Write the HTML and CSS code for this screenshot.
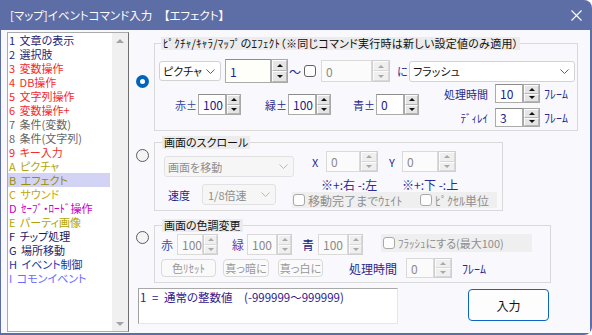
FILE: index.html
```html
<!DOCTYPE html>
<html lang="ja">
<head>
    <meta charset="UTF-8">
    <meta name="viewport" content="width=device-width, initial-scale=1.0">
    <title>[マップ]イベントコマンド入力</title>
    <link rel="stylesheet" href="styles.css">
</head>
<body>

<div class="window">
    <div class="titlebar">
        <span class="title">[マップ]イベントコマンド入力　【エフェクト】</span>
        <svg class="close" width="11" height="11" viewBox="0 0 11 11"><path d="M0.5 0.5L10.5 10.5M10.5 0.5L0.5 10.5" stroke="#fff" stroke-width="1.1" fill="none"/></svg>
    </div>

    <div class="content">
        <!-- Command list -->
        <div class="cmd-list">
            <ul class="items">
                <li class="c-navy">1 文章の表示</li>
                <li class="c-navy">2 選択肢</li>
                <li class="c-red">3 変数操作</li>
                <li class="c-red">4 DB操作</li>
                <li class="c-red">5 文字列操作</li>
                <li class="c-red">6 変数操作+</li>
                <li class="c-grey">7 条件(変数)</li>
                <li class="c-grey">8 条件(文字列)</li>
                <li class="c-red">9 キー入力</li>
                <li class="c-olive">A ピクチャ</li>
                <li class="c-olive2 selected">B エフェクト</li>
                <li class="c-gold">C サウンド</li>
                <li class="c-magenta">D ｾｰﾌﾞ・ﾛｰﾄﾞ操作</li>
                <li class="c-olive">E パーティ画像</li>
                <li class="c-dark">F チップ処理</li>
                <li class="c-dark2">G 場所移動</li>
                <li class="c-blue">H イベント制御</li>
                <li class="c-violet">I コモンイベント</li>
            </ul>
            <div class="scrollbar">
                <span class="arr-up"></span>
                <span class="arr-dn"></span>
            </div>
        </div>

        <!-- Effect settings -->
        <div class="panel">
            <div class="group">
                <span class="radio on radio-effect"></span>
                <fieldset class="box box-effect">
                    <legend class="legend-wide">ﾋﾟｸﾁｬ/ｷｬﾗ/ﾏｯﾌﾟのｴﾌｪｸﾄ（※同じコマンド実行時は新しい設定値のみ適用）</legend>
                    <div class="row-target">
                        <div class="combo combo-type">ピクチャ<svg class="chev" width="9" height="5" viewBox="0 0 9 5"><path d="M0.5 0.5L4.5 4.5L8.5 0.5" stroke="#606060" fill="none"/></svg></div>
                        <div class="spin spin-pic">
                            <span class="val">1</span>
                            <span class="btns"><i class="up"></i><i class="dn"></i></span>
                        </div>
                        <span class="tilde">～</span>
                        <span class="check"></span>
                        <div class="spin spin-to disabled">
                            <span class="val">0</span>
                            <span class="btns"><i class="up"></i><i class="dn"></i></span>
                        </div>
                        <span class="lb-ni">に</span>
                        <div class="combo combo-fx">フラッシュ<svg class="chev" width="9" height="5" viewBox="0 0 9 5"><path d="M0.5 0.5L4.5 4.5L8.5 0.5" stroke="#606060" fill="none"/></svg></div>
                    </div>
                    <div class="row-color">
                        <div class="rgb">
                            <span class="lb lb-pm c-r">赤±</span>
                            <div class="spin spin-rgb">
                                <span class="val">100</span>
                                <span class="btns"><i class="up"></i><i class="dn"></i></span>
                            </div>
                            <span class="lb lb-pm gap-g">緑±</span>
                            <div class="spin spin-rgb">
                                <span class="val">100</span>
                                <span class="btns"><i class="up"></i><i class="dn"></i></span>
                            </div>
                            <span class="lb lb-pm gap-b">青±</span>
                            <div class="spin spin-rgb">
                                <span class="val">0</span>
                                <span class="btns"><i class="up"></i><i class="dn"></i></span>
                            </div>
                        </div>
                        <div class="timing">
                            <div class="timing-row">
                                <span class="lb lb-time">処理時間</span>
                                <div class="spin spin-time">
                                    <span class="val">10</span>
                                    <span class="btns"><i class="up"></i><i class="dn"></i></span>
                                </div>
                                <span class="lb unit">ﾌﾚｰﾑ</span>
                            </div>
                            <div class="timing-row">
                                <span class="lb lb-time">ﾃﾞｨﾚｲ</span>
                                <div class="spin spin-time">
                                    <span class="val">3</span>
                                    <span class="btns"><i class="up"></i><i class="dn"></i></span>
                                </div>
                                <span class="lb unit">ﾌﾚｰﾑ</span>
                            </div>
                        </div>
                    </div>
                </fieldset>
            </div>

            <div class="group group-scroll">
                <span class="radio off radio-scroll"></span>
                <fieldset class="box box-scroll">
                    <legend class="legend-lg">画面のスクロール</legend>
                    <div class="scroll-body">
                        <div class="scroll-left">
                            <div class="combo combo-move disabled">画面を移動<svg class="chev" width="9" height="5" viewBox="0 0 9 5"><path d="M0.5 0.5L4.5 4.5L8.5 0.5" stroke="#b8b8b8" fill="none"/></svg></div>
                            <div class="speed-row">
                                <span class="lb lb-speed">速度</span>
                                <div class="combo combo-speed disabled">1/8倍速<svg class="chev" width="9" height="5" viewBox="0 0 9 5"><path d="M0.5 0.5L4.5 4.5L8.5 0.5" stroke="#b8b8b8" fill="none"/></svg></div>
                            </div>
                        </div>
                        <div class="scroll-right">
                            <div class="xy-row">
                                <span class="lb lb-x">X</span>
                                <div class="spin spin-x disabled">
                                    <span class="val">0</span>
                                    <span class="btns"><i class="up"></i><i class="dn"></i></span>
                                </div>
                                <span class="lb lb-y">Y</span>
                                <div class="spin spin-y disabled">
                                    <span class="val">0</span>
                                    <span class="btns"><i class="up"></i><i class="dn"></i></span>
                                </div>
                            </div>
                            <div class="note-row">
                                <span class="note note-x">※+:右 -:左</span>
                                <span class="note">※+:下 -:上</span>
                            </div>
                            <div class="strip strip-scroll">
                                <span class="check disabled"></span>
                                <span class="strip-text strip-wait">移動完了までｳｪｲﾄ</span>
                                <span class="check disabled"></span>
                                <span class="strip-text">ﾋﾟｸｾﾙ単位</span>
                            </div>
                        </div>
                    </div>
                </fieldset>
            </div>

            <div class="group group-tone">
                <span class="radio off radio-tone"></span>
                <fieldset class="box box-tone">
                    <legend class="legend-lg">画面の色調変更</legend>
                    <div class="tone-row">
                        <span class="lb lb-c tone-r">赤</span>
                        <div class="spin spin-tr disabled">
                            <span class="val">100</span>
                            <span class="btns"><i class="up"></i><i class="dn"></i></span>
                        </div>
                        <span class="lb lb-c tone-g">緑</span>
                        <div class="spin spin-tg disabled">
                            <span class="val">100</span>
                            <span class="btns"><i class="up"></i><i class="dn"></i></span>
                        </div>
                        <span class="lb lb-c tone-b">青</span>
                        <div class="spin spin-tg disabled">
                            <span class="val">100</span>
                            <span class="btns"><i class="up"></i><i class="dn"></i></span>
                        </div>
                        <div class="strip strip-flash">
                            <span class="check disabled"></span>
                            <span class="strip-text flash-text">ﾌﾗｯｼｭにする(最大100)</span>
                        </div>
                    </div>
                    <div class="tone-row2">
                        <span class="btn btn-reset">色ﾘｾｯﾄ</span>
                        <span class="btn btn-dark">真っ暗に</span>
                        <span class="btn btn-white">真っ白に</span>
                        <span class="lb lb-time2">処理時間</span>
                        <div class="spin spin-time2 disabled">
                            <span class="val">0</span>
                            <span class="btns"><i class="up"></i><i class="dn"></i></span>
                        </div>
                        <span class="lb unit2">ﾌﾚｰﾑ</span>
                    </div>
                </fieldset>
            </div>

            <div class="bottom">
                <div class="hint">1 = 通常の整数値　(-999999～999999)</div>
                <button type="button" class="ok">入力</button>
            </div>
        </div>
    </div>
</div>

</body>
</html>
```

FILE: styles.css
```css
body {
    margin: 0;
    background: #fff;
    font-family: "Noto Sans CJK JP", "Noto Sans", sans-serif;
    font-size: 11px;
    font-feature-settings: "palt";
    color: #111;
}

.window {
    width: 592px;
    height: 335px;
    background: #5d6ea6;
    border-radius: 0 8px 8px 0;
    display: flex;
    flex-direction: column;
    overflow: hidden;
}

.titlebar {
    height: 30px;
    flex: none;
    display: flex;
    align-items: center;
    justify-content: space-between;
    padding: 0 10px;
    color: #fff;
    font-size: 11.5px;
}

.content {
    flex: 1;
    margin: 0 2px 2px 1px;
    background: #f9f9fd;
    display: flex;
    min-height: 0;
}

/* command list */
.cmd-list {
    width: 122px;
    margin: 2px 0 1px 6px;
    box-sizing: border-box;
    border: 1px solid #ababab;
    border-right-color: #6e6e6e;
    background: #fff;
    display: flex;
    flex: none;
}

.items {
    flex: 1;
    list-style: none;
    margin: 0;
    padding: 0;
}

.items li {
    height: 14px;
    line-height: 14px;
    padding-left: 1px;
    margin-right: 2px;
    white-space: nowrap;
    word-spacing: 2px;
}

.items li.selected {
    background: #d3d3f5;
}

.c-navy { color: #1f1f78; }
.c-red { color: #f52a2a; }
.c-grey { color: #666; }
.c-olive { color: #b2a400; }
.c-olive2 { color: #9a8e00; }
.c-gold { color: #c8a600; }
.c-magenta { color: #c400c4; }
.c-dark { color: #1a1a55; }
.c-dark2 { color: #26266a; }
.c-blue { color: #2232a6; }
.c-violet { color: #6a6aff; }

.scrollbar {
    width: 16px;
    background: #f0f0f0;
    display: flex;
    flex-direction: column;
    justify-content: space-between;
    align-items: center;
    padding: 6px 0 5px;
}

.arr-up,
.arr-dn {
    width: 0;
    height: 0;
    border-left: 4px solid transparent;
    border-right: 4px solid transparent;
}

.arr-up { border-bottom: 4px solid #a3a3a3; }
.arr-dn { border-top: 4px solid #a3a3a3; }

/* right panel */
.panel {
    flex: 1;
    padding-top: 7px;
    display: flex;
    flex-direction: column;
}

.group {
    display: flex;
    align-items: flex-start;
}

.group-scroll { margin-top: 5px; }
.group-tone { margin-top: 8px; }

.radio {
    width: 13px;
    height: 13px;
    box-sizing: border-box;
    border-radius: 50%;
    margin: 0 5px 0 7px;
    flex: none;
    display: flex;
    align-items: center;
    justify-content: center;
}

.radio.on { background: #0063bd; }

.radio.on::after {
    content: "";
    width: 5px;
    height: 5px;
    border-radius: 50%;
    background: #fff;
}

.radio.off {
    border: 1px solid #5c5c5c;
    background: #f4f4f4;
}

.radio-effect { margin-top: 38px; }
.radio-scroll { margin-top: 13px; }
.radio-tone { margin-top: 12px; }

.box {
    margin: 0;
    padding: 0;
    border: 1px solid #d9d9d9;
    min-width: 0;
    box-sizing: border-box;
}

.box legend {
    margin-left: 6px;
    padding: 0 2px;
    background: #ececec;
    line-height: 13px;
    color: #111;
    white-space: nowrap;
}

.box legend.legend-wide {
    letter-spacing: 0.25px;
}

.box legend.legend-lg {
    margin-left: 7px;
}

.box-effect { width: 424px; padding-bottom: 3px; }
.box-scroll { width: 349px; padding-bottom: 2px; }
.box-tone { width: 397px; padding-bottom: 4px; }

.lb {
    color: #28288c;
    white-space: nowrap;
    flex: none;
}

/* combos */
.combo {
    display: flex;
    align-items: center;
    justify-content: space-between;
    box-sizing: border-box;
    height: 21px;
    border: 1px solid #d2d2d2;
    border-radius: 3px;
    background: #fff;
    padding: 0 5px 0 3px;
    color: #111;
    white-space: nowrap;
    flex: none;
}

.combo.disabled {
    background: #f6f6f6;
    border-color: #e2e2e2;
    color: #8e8e8e;
}

.combo-type { width: 62px; height: 20px; margin-left: 2px; }
.combo-fx { width: 166px; margin-left: 1px; }
.combo-move { width: 130px; margin: 7px 0 0 9px; }
.combo-speed { width: 74px; padding-left: 5px; }

/* spinners */
.spin {
    display: flex;
    height: 21px;
    flex: none;
}

.spin .val {
    box-sizing: border-box;
    border: 1px solid #ababab;
    border-top-color: #8c8c8c;
    background: #fff;
    padding-left: 4px;
    display: flex;
    align-items: center;
    font-size: 12px;
    color: #22228a;
}

.spin .btns {
    box-sizing: border-box;
    border: 1px solid #a8a8a8;
    display: flex;
    flex-direction: column;
    background: #e5e5e5;
}

.spin .btns i {
    flex: 1;
    display: flex;
    align-items: center;
    justify-content: center;
    border-top: 1px solid #fcfcfc;
    border-left: 1px solid #fcfcfc;
    border-bottom: 1px solid #b6b6b6;
    border-right: 1px solid #b6b6b6;
}

.spin .btns i::before {
    content: "";
    width: 0;
    height: 0;
    border-left: 3px solid transparent;
    border-right: 3px solid transparent;
}

.spin .btns .up::before { border-bottom: 3px solid #111; }
.spin .btns .dn::before { border-top: 3px solid #111; }

.spin.disabled .val {
    border-color: #dadada;
    background: #fbfbfb;
    color: #8a8a8a;
}

.spin.disabled .btns {
    border-color: #cfcfcf;
    background: #efefef;
}

.spin.disabled .btns i {
    border-bottom-color: #d8d8d8;
    border-right-color: #d8d8d8;
}

.spin.disabled .btns .up::before { border-bottom-color: #a8a8a8; }
.spin.disabled .btns .dn::before { border-top-color: #a8a8a8; }

.spin-pic { height: 24px; margin-left: 4px; }
.spin-pic .val { width: 46px; background: #fffffa; }
.spin-pic .btns { width: 17px; }

.spin-to { height: 22px; margin-left: 5px; }
.spin-to .val { width: 51px; }
.spin-to .btns { width: 18px; }

.spin-rgb .val { width: 28px; }
.spin-rgb .btns { width: 15px; }

.spin-time { height: 19px; }
.spin-time .val { width: 28px; }
.spin-time .btns { width: 17px; }

.spin-x .val { width: 34px; }
.spin-y .val { width: 36px; }
.spin-x .btns,
.spin-y .btns { width: 18px; }

.spin-tr .val { width: 26px; }
.spin-tg .val { width: 30px; }
.spin-tr .btns,
.spin-tg .btns { width: 15px; }

.spin-time2 { height: 20px; margin-left: 13px; }
.spin-time2 .val { width: 28px; }
.spin-time2 .btns { width: 18px; }

/* checkboxes */
.check {
    width: 12px;
    height: 12px;
    box-sizing: border-box;
    border: 1px solid #616161;
    border-radius: 3px;
    background: #fdfdfd;
    flex: none;
    margin-left: 2px;
}

.check.disabled {
    border-color: #a9a9a9;
}

/* effect group */
.row-target {
    display: flex;
    align-items: center;
    height: 24px;
    margin-top: 9px;
    padding-left: 2px;
}

.tilde {
    width: 14px;
    text-align: center;
    color: #28288c;
    font-size: 12px;
}

.lb-ni {
    width: 11px;
    margin-left: 7px;
    color: #28288c;
}

.row-color {
    display: flex;
    align-items: flex-start;
    margin-top: 1px;
}

.rgb {
    display: flex;
    align-items: center;
    margin: 10px 0 0 20px;
}

.lb-pm {
    width: 22px;
    margin-right: 1px;
}

.c-r { color: #3444a6; }
.gap-g { margin-left: 24px; }
.gap-b { margin-left: 22px; }

.timing {
    margin-left: 25px;
}

.timing-row {
    display: flex;
    align-items: center;
}

.timing-row + .timing-row {
    margin-top: 5px;
}

.lb-time {
    width: 44px;
    margin-right: 7px;
    text-align: right;
}

.unit {
    margin-left: 4px;
    font-size: 12px;
}

/* scroll group */
.scroll-body {
    display: flex;
}

.scroll-left {
    width: 137px;
    flex: none;
}

.speed-row {
    display: flex;
    align-items: center;
    margin-top: 7px;
}

.lb-speed {
    width: 34px;
    margin-left: 13px;
}

.scroll-right {
    display: flex;
    flex-direction: column;
}

.xy-row {
    display: flex;
    align-items: center;
    margin-top: 2px;
}

.lb-x {
    width: 14px;
    margin-left: 20px;
}

.lb-y {
    width: 13px;
    margin-left: 11px;
}

.note-row {
    display: flex;
    height: 12px;
    line-height: 12px;
    margin-top: 7px;
    font-size: 12px;
}

.note {
    color: #2a2a9a;
    white-space: nowrap;
}

.note-x {
    width: 81px;
    margin-left: 29px;
}

.strip {
    display: flex;
    align-items: center;
    background: #efefef;
    flex: none;
}

.strip-scroll {
    width: 205px;
    height: 16px;
    margin-top: 1px;
}

.strip-scroll .check:first-child {
    margin-left: 1px;
}

.strip-text {
    margin-left: 3px;
    color: #8e8e8e;
    white-space: nowrap;
    font-size: 12px;
}

.strip-text.flash-text {
    font-size: 11px;
}

.strip-wait {
    width: 110px;
}

/* tone group */
.tone-row {
    display: flex;
    align-items: flex-start;
    margin-top: 2px;
}

.lb-c {
    width: 16px;
    height: 21px;
    line-height: 21px;
    font-size: 12px;
}

.tone-r { margin-left: 6px; color: #3850b4; }
.tone-g { width: 15px; margin-left: 14px; color: #6a3a98; }
.tone-b { margin-left: 10px; color: #22227a; }

.strip-flash {
    width: 151px;
    height: 18px;
    margin-left: 18px;
}

.tone-row2 {
    display: flex;
    align-items: center;
    height: 20px;
    margin-top: 3px;
}

.btn {
    box-sizing: border-box;
    height: 18px;
    border: 1px solid #dadada;
    border-radius: 4px;
    background: #fafafa;
    color: #989898;
    display: flex;
    align-items: center;
    justify-content: center;
    white-space: nowrap;
    flex: none;
}

.btn-reset { width: 55px; margin-left: 6px; }
.btn-dark { width: 46px; margin-left: 7px; }
.btn-white { width: 45px; margin-left: 9px; }

.lb-time2 {
    width: 44px;
    margin-left: 26px;
    font-size: 12px;
}

.unit2 {
    margin-left: 10px;
    font-size: 12px;
}

/* bottom */
.bottom {
    display: flex;
    align-items: flex-start;
    margin-top: 5px;
}

.hint {
    width: 260px;
    height: 36px;
    box-sizing: border-box;
    margin-left: 9px;
    border: 1px solid #e6e6e6;
    border-left-color: #a0a0a0;
    border-top-color: #a8a8a8;
    background: #fff;
    padding: 1px 0 0 1px;
    line-height: 14px;
    font-size: 11.5px;
    word-spacing: 3px;
    color: #2e2092;
    white-space: nowrap;
}

.ok {
    width: 81px;
    height: 32px;
    margin: 1px 0 0 70px;
    border: 1px solid #0a66c2;
    border-radius: 4px;
    background: #fdfdfd;
    font-family: inherit;
    font-size: 12px;
    color: #111;
    padding: 0;
}
```
